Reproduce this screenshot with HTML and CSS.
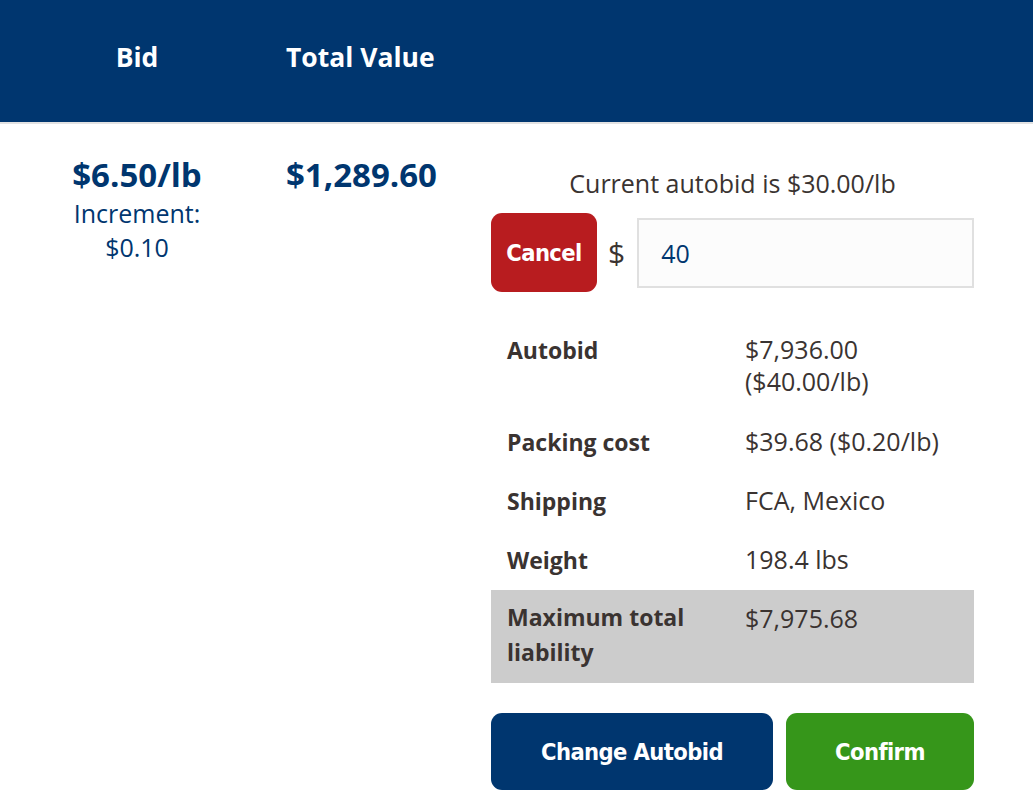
FILE: index.html
```html
<!DOCTYPE html>
<html lang="en">
<head>
  <meta charset="UTF-8" />
  <title>Autobid</title>
  <link rel="stylesheet" href="styles.css">
</head>
<body>
  <div class="cabecera">
    <div class="col col-bid">Bid</div>
    <div class="col col-total">Total Value</div>
  </div>

  <div class="fila">
    <div class="col col-bid">
      <div class="precio">$6.50/lb</div>
      <div class="incremento">Increment:<br>$0.10</div>
    </div>
    <div class="col col-total">
      <div class="precio">$1,289.60</div>
    </div>

    <div class="panel">
      <p class="actual">Current autobid is $30.00/lb</p>

      <div class="entrada">
        <button class="btn btn-cancel">Cancel</button>
        <span class="moneda">$</span>
        <input type="text" class="monto" value="40">
      </div>

      <table class="resumen">
        <tr class="primera">
          <th>Autobid</th>
          <td>$7,936.00<br>($40.00/lb)</td>
        </tr>
        <tr>
          <th>Packing cost</th>
          <td>$39.68 ($0.20/lb)</td>
        </tr>
        <tr>
          <th>Shipping</th>
          <td>FCA, Mexico</td>
        </tr>
        <tr>
          <th>Weight</th>
          <td>198.4 lbs</td>
        </tr>
        <tr class="total">
          <th>Maximum total liability</th>
          <td>$7,975.68</td>
        </tr>
      </table>

      <div class="acciones">
        <button class="btn btn-change">Change Autobid</button>
        <button class="btn btn-confirm">Confirm</button>
      </div>
    </div>
  </div>
</body>
</html>
```

FILE: styles.css
```css
body {
  margin: 0;
  font-family: 'Open Sans', 'Noto Sans', sans-serif;
  color: #3a3331;
  background-color: #ffffff;
}
.cabecera {
  display: grid;
  grid-template-columns: 274px 217px;
  align-items: center;
  box-sizing: border-box;
  height: 124px;
  padding-bottom: 8px;
  background-color: #00366f;
  border-bottom: 2px solid #e2e2e2;
  color: #ffffff;
  font-size: 26.5px;
  font-weight: bold;
}
.col-bid {
  text-align: center;
}
.col-total {
  padding-left: 12px;
}
.fila {
  display: grid;
  grid-template-columns: 274px 217px 483px;
  padding-top: 30px;
}
.precio {
  color: #00366f;
  font-size: 33px;
  font-weight: bold;
  line-height: 42px;
}
.incremento {
  color: #00366f;
  font-size: 25px;
  line-height: 34px;
}
.panel {
  padding-top: 14px;
}
.actual {
  margin: 0 0 15px;
  text-align: center;
  font-size: 25px;
  line-height: 30px;
}
.entrada {
  display: flex;
  align-items: center;
}
.btn {
  border: none;
  border-radius: 11px;
  color: #ffffff;
  font-family: 'DejaVu Sans Condensed', 'DejaVu Sans', sans-serif;
  font-stretch: condensed;
  font-size: 23.5px;
  font-weight: bold;
  letter-spacing: -0.6px;
  cursor: pointer;
}
.btn-cancel {
  width: 106px;
  height: 79px;
  background-color: #b81c1f;
}
.moneda {
  margin: 0 12px 0 11px;
  font-size: 30px;
}
.monto {
  flex: 1;
  min-width: 0;
  box-sizing: border-box;
  height: 70px;
  padding: 0 22px;
  border: 2px solid #e0e0e0;
  background-color: #fcfcfc;
  color: #00366f;
  font-family: 'Open Sans', 'Noto Sans', sans-serif;
  font-size: 25px;
}
.resumen {
  width: 100%;
  margin-top: 29px;
  border-collapse: collapse;
}
.resumen th,
.resumen td {
  padding: 12px 16px;
  text-align: left;
  vertical-align: top;
}
.resumen th {
  width: 206px;
  font-size: 23px;
  line-height: 35px;
}
.resumen td {
  font-size: 25px;
  font-weight: normal;
  line-height: 32px;
}
.resumen .primera td {
  padding-bottom: 16px;
}
.resumen .total {
  background-color: #cccccc;
}
.resumen .total th {
  padding-top: 10px;
  padding-bottom: 13px;
}
.resumen .total td {
  padding-top: 12px;
}
.acciones {
  display: flex;
  gap: 13px;
  margin-top: 30px;
}
.btn-change {
  width: 282px;
  height: 77px;
  background-color: #00366f;
}
.btn-confirm {
  flex: 1;
  height: 77px;
  background-color: #36961a;
}
```
